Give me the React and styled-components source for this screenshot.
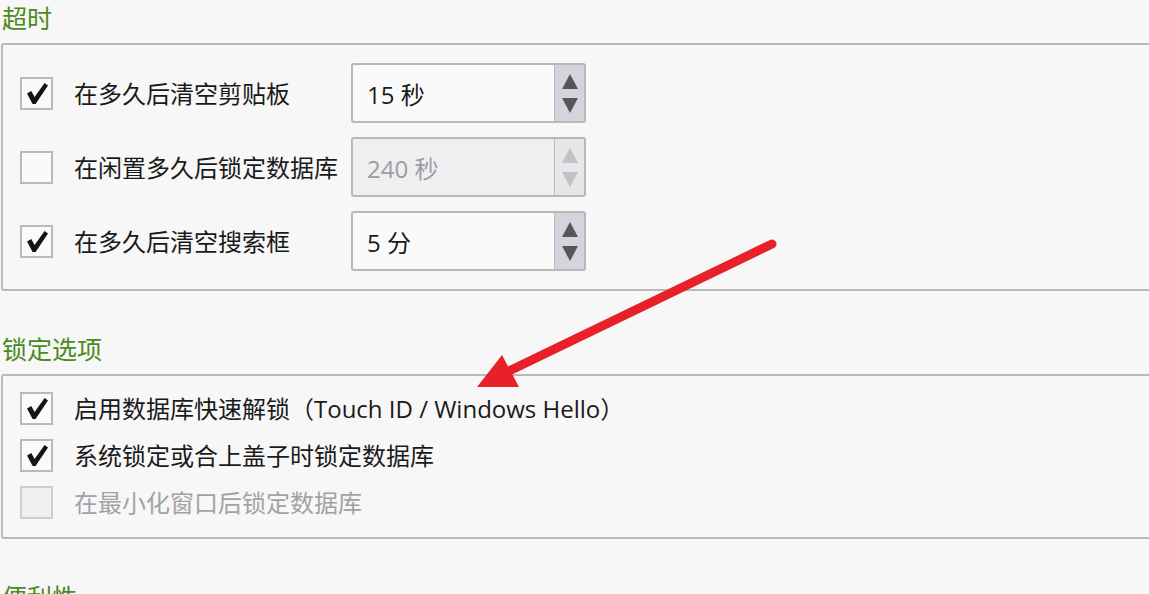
import React from "react";
import styled, { createGlobalStyle } from "styled-components";

const GlobalStyle = createGlobalStyle`
  html, body {
    margin: 0;
    padding: 0;
    background: #f7f7f7;
  }
  body {
    font-family: "Open Sans", "Noto Sans CJK SC", sans-serif;
    color: #1a1a1a;
    overflow: hidden;
  }
`;

const Page = styled.div`
  position: relative;
  width: 1149px;
  height: 594px;
  overflow: hidden;
  padding-left: 1px;
  box-sizing: border-box;
`;

const Heading = styled.h2`
  margin: ${(p) => p.$top} 0 9px 1px;
  height: 32px;
  line-height: 32px;
  font-size: 25px;
  font-weight: 400;
  color: #4b8a1c;
`;

const GroupBox = styled.div`
  width: 1200px;
  border: 2px solid #b9b9b9;
  border-radius: 3px;
  padding: ${(p) => (p.$tight ? "16px 0 18px 17px" : "18px 0 18px 17px")};
  display: flex;
  flex-direction: column;
  gap: 14px;
`;

const Row = styled.div`
  display: flex;
  align-items: center;
  height: ${(p) => (p.$tall ? "60px" : "33px")};
`;

const Box = styled.div`
  width: 33px;
  height: 33px;
  box-sizing: border-box;
  border: 2px solid ${(p) => (p.$disabled ? "#cdcdd0" : "#bababa")};
  background: ${(p) => (p.$disabled ? "#efeff1" : "#fafafa")};
  flex-shrink: 0;
`;

const Label = styled.span`
  margin-left: 21px;
  width: ${(p) => (p.$fixed ? "277px" : "auto")};
  font-size: 24px;
  line-height: 33px;
  white-space: nowrap;
  color: ${(p) => (p.$disabled ? "#a2a2a6" : "#1a1a1a")};
`;

const Spin = styled.div`
  width: 235px;
  height: 60px;
  box-sizing: border-box;
  border: 2px solid #b8b8b8;
  border-radius: 3px;
  display: flex;
  overflow: hidden;
  background: ${(p) => (p.$disabled ? "#efeff2" : "#fafafa")};
`;

const SpinValue = styled.div`
  flex: 1;
  padding-left: 14px;
  display: flex;
  align-items: center;
  font-size: 24px;
  color: ${(p) => (p.$disabled ? "#9c9ca0" : "#1a1a1a")};
`;

const SpinButtons = styled.div`
  width: 29px;
  border-left: 1px solid #b8b8c0;
  background: ${(p) => (p.$disabled ? "#e7e7e9" : "#d4d4dc")};
  display: flex;
  flex-direction: column;
  align-items: center;
  justify-content: center;
  gap: 9px;
`;

const Tri = styled.div`
  width: 0;
  height: 0;
  border-left: 8px solid transparent;
  border-right: 8px solid transparent;
  ${(p) =>
    p.$down
      ? `border-top: 15px solid ${p.$disabled ? "#c2c2c6" : "#55555c"};`
      : `border-bottom: 15px solid ${p.$disabled ? "#c2c2c6" : "#55555c"};`}
`;

const ArrowLayer = styled.svg`
  position: absolute;
  left: 0;
  top: 0;
  pointer-events: none;
`;

function Check({ checked, disabled }) {
  return (
    <Box $disabled={disabled}>
      {checked && (
        <svg width="29" height="29" viewBox="0 0 29 29">
          <path
            d="M5 14.5 L9.3 12 L12.6 18 L22.6 4 L26 6.6 L13.6 25 L10.6 25 Z"
            fill="#141414"
          />
        </svg>
      )}
    </Box>
  );
}

function SpinBox({ value, disabled }) {
  return (
    <Spin $disabled={disabled}>
      <SpinValue $disabled={disabled}>{value}</SpinValue>
      <SpinButtons $disabled={disabled}>
        <Tri $disabled={disabled} />
        <Tri $down $disabled={disabled} />
      </SpinButtons>
    </Spin>
  );
}

const timeouts = [
  { label: "在多久后清空剪贴板", value: "15 秒", checked: true },
  { label: "在闲置多久后锁定数据库", value: "240 秒", checked: false },
  { label: "在多久后清空搜索框", value: "5 分", checked: true },
];

const lockOptions = [
  { label: "启用数据库快速解锁（Touch ID / Windows Hello）", checked: true },
  { label: "系统锁定或合上盖子时锁定数据库", checked: true },
  { label: "在最小化窗口后锁定数据库", checked: false, disabled: true },
];

export default function App() {
  return (
    <Page>
      <GlobalStyle />
      <Heading $top="2px">超时</Heading>
      <GroupBox>
        {timeouts.map((t) => (
          <Row $tall key={t.label}>
            <Check checked={t.checked} />
            <Label $fixed>{t.label}</Label>
            <SpinBox value={t.value} disabled={!t.checked} />
          </Row>
        ))}
      </GroupBox>

      <Heading $top="42px">锁定选项</Heading>
      <GroupBox $tight>
        {lockOptions.map((o) => (
          <Row key={o.label}>
            <Check checked={o.checked} disabled={o.disabled} />
            <Label $disabled={o.disabled}>{o.label}</Label>
          </Row>
        ))}
      </GroupBox>

      <Heading $top="42px">便利性</Heading>

      <ArrowLayer width="1149" height="594" viewBox="0 0 1149 594">
        <line
          x1="772"
          y1="244"
          x2="505"
          y2="373"
          stroke="#e8202a"
          strokeWidth="9"
          strokeLinecap="round"
        />
        <polygon points="477,387 502,355 519,387" fill="#e8202a" />
      </ArrowLayer>
    </Page>
  );
}
